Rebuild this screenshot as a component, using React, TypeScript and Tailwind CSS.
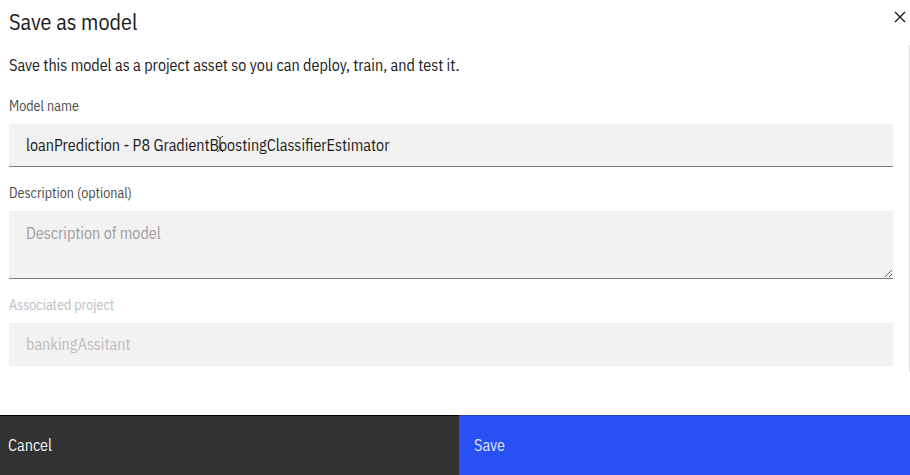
import type { ReactNode } from "react";

const fieldClass =
  "block w-full rounded-none bg-[#f2f2f2] px-[17px] text-base leading-6 outline-none";

function Field({
  id,
  label,
  muted = false,
  children,
}: {
  id: string;
  label: string;
  muted?: boolean;
  children: ReactNode;
}) {
  return (
    <div className="flex flex-col gap-2">
      <label
        htmlFor={id}
        className={`text-sm leading-5 ${muted ? "text-[#bebebe]" : "text-[#4d4d4d]"}`}
      >
        {label}
      </label>
      {children}
    </div>
  );
}

function TextCursor() {
  return (
    <svg
      className="pointer-events-none absolute top-3 left-52 h-4 w-1.5"
      viewBox="0 0 6 16"
      fill="none"
      stroke="#222222"
      aria-hidden="true"
    >
      <path d="M0 .5h1L3 2.500 5 .5h1M3 2v12M0 15.500h1L3 13.500l2 2h1M1.500 11h3" />
    </svg>
  );
}

export default function App() {
  return (
    <form
      className="flex min-h-screen flex-col bg-white font-['IBM_Plex_Sans_Condensed','Roboto_Condensed',Roboto,sans-serif] text-[#1c1c1c]"
      onSubmit={(event) => event.preventDefault()}
    >
      <header className="flex h-[45px] items-center justify-between pr-0.5 pl-[9px]">
        <h1 className="mb-0.5 text-[22px] leading-7">Save as model</h1>
        <button type="button" aria-label="Close" className="mb-3 p-0.5">
          <svg className="size-3" viewBox="0 0 12 12" fill="none" stroke="#1c1c1c" strokeWidth="1.4" aria-hidden="true">
            <path d="M1 1l10 10M11 1L1 11" />
          </svg>
        </button>
      </header>

      <main className="flex flex-col border-r border-[#dedede] pt-2 pr-4 pb-1.5 pl-[9px]">
        <p className="mb-[19px] text-base leading-6">
          Save this model as a project asset so you can deploy, train, and test it.
        </p>
        <div className="flex flex-col gap-4">
          <Field id="model-name" label="Model name">
            <div className="relative">
              <input
                id="model-name"
                type="text"
                defaultValue="loanPrediction - P8 GradientBoostingClassifierEstimator"
                className={`${fieldClass} h-[43px] border-b border-[#7c7c7c]`}
              />
              <TextCursor />
            </div>
          </Field>
          <Field id="description" label="Description (optional)">
            <textarea
              id="description"
              placeholder="Description of model"
              className={`${fieldClass} h-[68px] resize-y border-b border-[#7c7c7c] pt-2.5 placeholder:text-[#a0a0a0]`}
            />
          </Field>
          <Field id="project" label="Associated project" muted>
            <input
              id="project"
              type="text"
              disabled
              defaultValue="bankingAssitant"
              className={`${fieldClass} h-[43px] pb-0.5 text-[#bebebe]`}
            />
          </Field>
        </div>
      </main>

      <footer className="mt-auto grid h-[60px] grid-cols-[459fr_451fr] text-base leading-6">
        <button type="button" className="border-t border-black bg-[#323232] pb-0.5 pl-2 text-left text-[#f0f0f0]">
          Cancel
        </button>
        <button type="submit" className="border-t border-[#2345b8] bg-[#2850f5] pb-0.5 pl-[15px] text-left text-[#dfe6ff]">
          Save
        </button>
      </footer>
    </form>
  );
}
